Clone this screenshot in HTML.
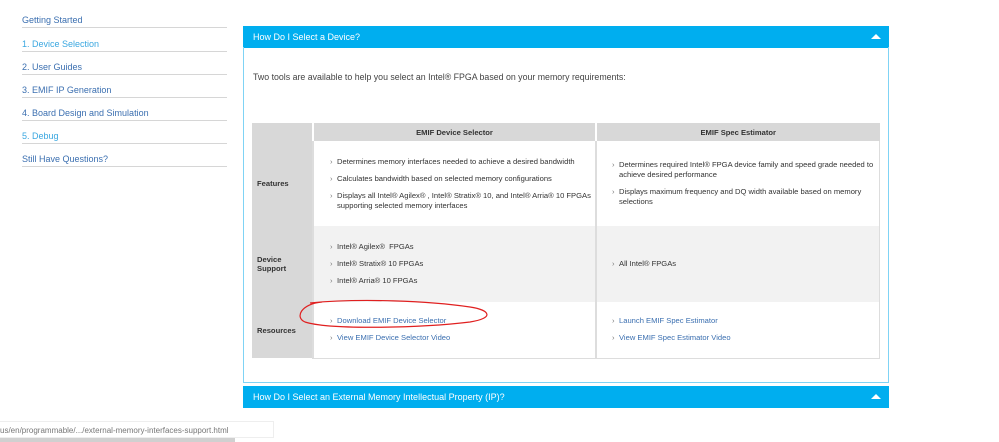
<!DOCTYPE html>
<html><head><meta charset="utf-8"><style>
*{margin:0;padding:0;box-sizing:border-box}
body{width:999px;height:442px;background:#fff;font-family:"Liberation Sans",sans-serif;position:relative;overflow:hidden;color:#333}
.nav{position:absolute;left:22px;width:205px;font-size:9px}
.nav div{position:absolute;left:0;width:205px;height:23px;border-bottom:1px solid #d6d6d6;padding-top:10px;color:#3b6fb0;white-space:nowrap}
.nav div.l{color:#3aa7e0}
.hdr{position:absolute;left:243px;width:646px;height:22px;background:#00aeef;color:#fff;font-size:9px;padding:6px 0 0 10px}
.hdr:after{content:"";position:absolute;right:8px;top:8px;border-left:5px solid transparent;border-right:5px solid transparent;border-bottom:5px solid #fff}
.body{position:absolute;left:243px;top:47px;width:646px;height:336px;border:1px solid #7fd3f5;border-top:none}
.intro{position:absolute;left:253px;top:72px;font-size:8.8px;color:#444}
table{position:absolute;left:252px;top:123px;border-collapse:collapse;font-size:7.6px;width:628px}
td,th{vertical-align:middle}
th{background:#d8d8d8;height:18px;font-weight:bold;color:#333;border-left:2px solid #fff}
td.lab{background:#d8d8d8;font-weight:bold;width:61px;padding-left:5px;color:#333}
td.c{border-left:2px solid #ddd;padding-left:16px;width:283px}
td.c2{border-left:2px solid #ddd;border-right:1px solid #ddd;padding-left:15px}
.g td.c,.g td.c2{background:#f2f2f2}
p{position:relative;padding-left:7px;margin:0 0 7px;line-height:10px}
p:before{content:"›";position:absolute;left:0;top:0;color:#777}
p:last-child{margin-bottom:0}
a{color:#3b6fb0;text-decoration:none}
.status{position:absolute;left:0;top:421px;width:274px;height:17px;border:1px solid #eee;border-left:none;font-size:8px;color:#777;padding:4px 0 0 0;background:#fff}
.sb{position:absolute;left:0;top:438px;width:235px;height:4px;background:#d0d0d0}
</style></head><body>
<div class="nav">
<div style="top:5px">Getting Started</div>
<div class="l" style="top:29px">1. Device Selection</div>
<div style="top:52px">2. User Guides</div>
<div style="top:75px">3. EMIF IP Generation</div>
<div style="top:98px">4. Board Design and Simulation</div>
<div class="l" style="top:121px">5. Debug</div>
<div style="top:144px">Still Have Questions?</div>
</div>
<div class="hdr" style="top:26px">How Do I Select a Device?</div>
<div class="body"></div>
<div class="intro">Two tools are available to help you select an Intel® FPGA based on your memory requirements:</div>
<table>
<tr><th style="background:#d8d8d8;border-left:none;width:61px"></th><th>EMIF Device Selector</th><th>EMIF Spec Estimator</th></tr>
<tr style="height:85px"><td class="lab">Features</td>
<td class="c"><p>Determines memory interfaces needed to achieve a desired bandwidth</p><p>Calculates bandwidth based on selected memory configurations</p><p>Displays all Intel® Agilex® , Intel® Stratix® 10, and Intel® Arria® 10 FPGAs supporting selected memory interfaces</p></td>
<td class="c2"><p>Determines required Intel® FPGA device family and speed grade needed to achieve desired performance</p><p>Displays maximum frequency and DQ width available based on memory selections</p></td></tr>
<tr class="g" style="height:76px"><td class="lab">Device<br>Support</td>
<td class="c"><p>Intel® Agilex®&nbsp; FPGAs</p><p>Intel® Stratix® 10 FPGAs</p><p>Intel® Arria® 10 FPGAs</p></td>
<td class="c2"><p>All Intel® FPGAs</p></td></tr>
<tr style="height:56px"><td class="lab">Resources</td>
<td class="c" style="border-bottom:1px solid #ddd"><p><a>Download EMIF Device Selector</a></p><p><a>View EMIF Device Selector Video</a></p></td>
<td class="c2" style="border-bottom:1px solid #ddd"><p><a>Launch EMIF Spec Estimator</a></p><p><a>View EMIF Spec Estimator Video</a></p></td></tr>
</table>
<svg style="position:absolute;left:0;top:0" width="999" height="442"><path d="M322 302 C300 304 295 318 305 322 C330 330 420 328 470 322 C495 318 490 310 470 307 C430 301 360 298 310 303" fill="none" stroke="#e02020" stroke-width="1.2"/></svg>
<div class="hdr" style="top:386px">How Do I Select an External Memory Intellectual Property (IP)?</div>
<div class="status">us/en/programmable/.../external-memory-interfaces-support.html</div>
<div class="sb"></div>
</body></html>
